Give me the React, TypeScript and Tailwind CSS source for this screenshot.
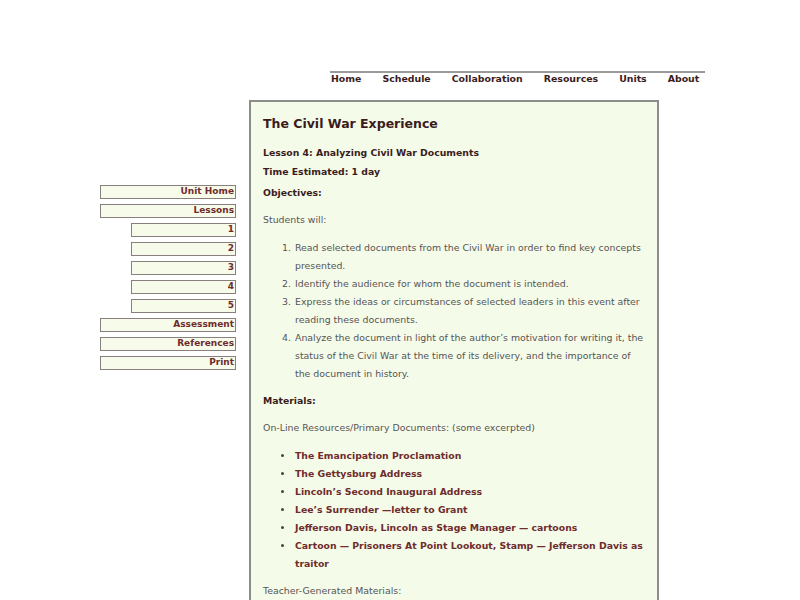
import React from 'react';

const navItems = ['Home', 'Schedule', 'Collaboration', 'Resources', 'Units', 'About'];

const sideItems = [
    { label: 'Unit Home', sub: false },
    { label: 'Lessons', sub: false },
    { label: '1', sub: true },
    { label: '2', sub: true },
    { label: '3', sub: true },
    { label: '4', sub: true },
    { label: '5', sub: true },
    { label: 'Assessment', sub: false },
    { label: 'References', sub: false },
    { label: 'Print', sub: false },
];

const objectives = [
    'Read selected documents from the Civil War in order to find key concepts presented.',
    'Identify the audience for whom the document is intended.',
    'Express the ideas or circumstances of selected leaders in this event after reading these documents.',
    "Analyze the document in light of the author\u2019s motivation for writing it, the status of the Civil War at the time of its delivery, and the importance of the document in history.",
];

const documents = [
    'The Emancipation Proclamation',
    'The Gettysburg Address',
    'Lincoln\u2019s Second Inaugural Address',
    'Lee\u2019s Surrender \u2014letter to Grant',
    'Jefferson Davis, Lincoln as Stage Manager \u2014 cartoons',
    'Cartoon \u2014 Prisoners At Point Lookout, Stamp \u2014 Jefferson Davis as traitor',
];

export default function App() {
    return (
        <div className="h-[600px] overflow-hidden bg-white font-['DejaVu_Sans',Verdana,sans-serif]">
            {/* top navigation */}
            <div className="ml-[330px] mt-[71px] w-[375px] border-t-2 border-[#9a9a9a]">
                <ul className="flex gap-[21px] pl-[1px] text-[9.4px] font-bold leading-[12px] text-[#3b1c1c]">
                    {navItems.map((item) => (
                        <li key={item}>{item}</li>
                    ))}
                </ul>
            </div>

            <div className="mt-[15px] flex">
                {/* side menu */}
                <div className="ml-[100px] mt-[85px] flex w-[136px] flex-col gap-[5px]">
                    {sideItems.map((item) => (
                        <div
                            key={item.label}
                            className={
                                item.sub
                                    ? 'ml-[31px] h-[14px] border-[1.5px] border-[#8a7f7f] bg-[#f7fbea] pr-[1px] text-right text-[9px] font-bold leading-[11px] text-[#6e2c2c]'
                                    : 'h-[14px] border-[1.5px] border-[#8a7f7f] bg-[#f7fbea] pr-[1px] text-right text-[9px] font-bold leading-[11px] text-[#6e2c2c]'
                            }
                        >
                            {item.label}
                        </div>
                    ))}
                </div>

                {/* lesson content */}
                <div className="ml-[13px] h-[520px] w-[410px] border-2 border-[#8c8c8c] bg-[#f5fbe9] px-[12px] pt-[12px]">
                    <h1 className="text-[12.5px] font-bold leading-[20px] text-[#3a1c1c]">The Civil War Experience</h1>
                    <p className="mt-[10px] text-[9.3px] font-bold leading-[18px] text-[#3a1c1c]">Lesson 4: Analyzing Civil War Documents</p>
                    <p className="mt-[1px] text-[9.3px] font-bold leading-[18px] text-[#3a1c1c]">Time Estimated: 1 day</p>
                    <p className="mt-[3px] text-[9.3px] font-bold leading-[18px] text-[#3a1c1c]">Objectives:</p>
                    <p className="mt-[9px] text-[9.4px] leading-[18px] text-[#555]">Students will:</p>

                    <ol className="mt-[10px] list-decimal pl-[31px] text-[9.4px] leading-[18px] text-[#555]">
                        {objectives.map((text) => (
                            <li key={text} className="pl-[1px]">{text}</li>
                        ))}
                    </ol>

                    <p className="mt-[9px] text-[9.3px] font-bold leading-[18px] text-[#3a1c1c]">Materials:</p>
                    <p className="mt-[9px] text-[9.4px] leading-[18px] text-[#555]">On-Line Resources/Primary Documents: (some excerpted)</p>

                    <ul className="mt-[10px] list-disc pl-[31px] text-[9.3px] font-bold leading-[18px] text-[#6e2c2c] marker:text-[#444]">
                        {documents.map((text) => (
                            <li key={text} className="pl-[1px]">{text}</li>
                        ))}
                    </ul>

                    <p className="mt-[9px] text-[9.4px] leading-[18px] text-[#555]">Teacher-Generated Materials:</p>
                </div>
            </div>
        </div>
    );
}
